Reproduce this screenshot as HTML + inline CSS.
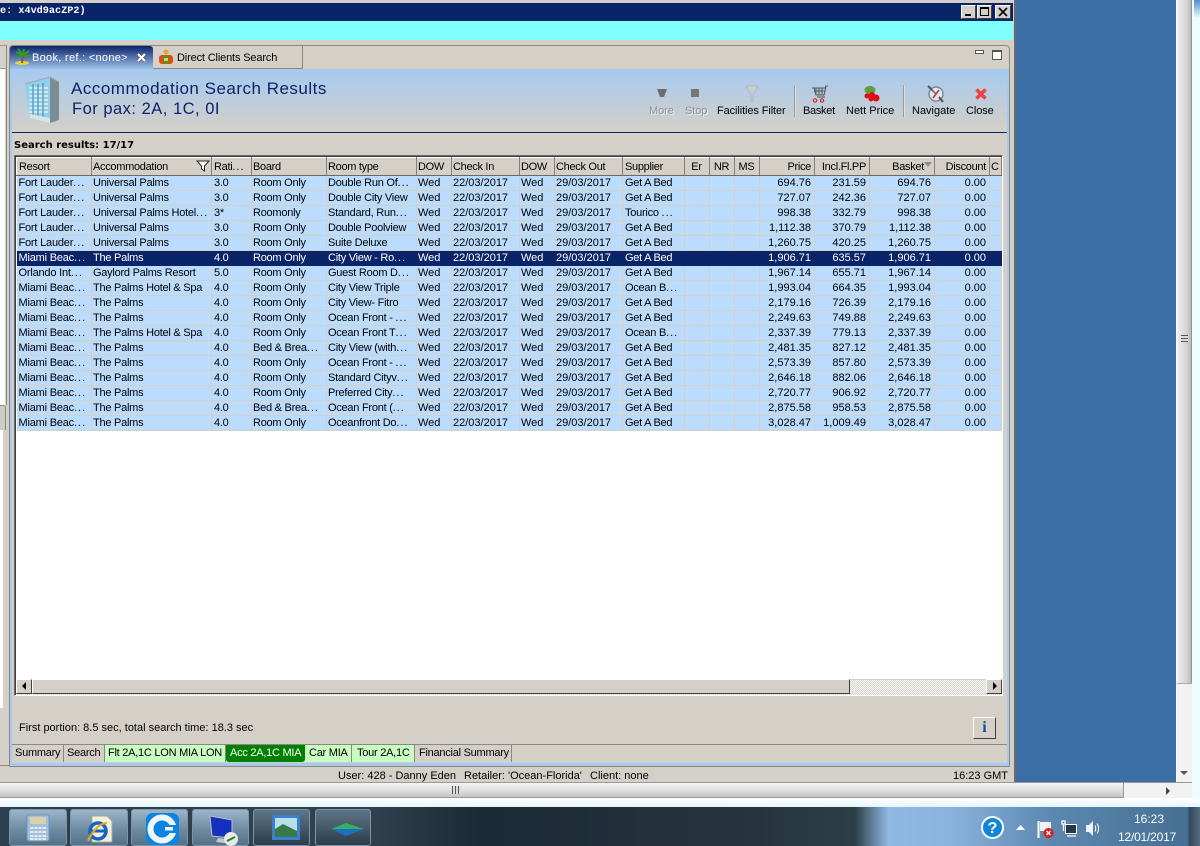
<!DOCTYPE html>
<html><head><meta charset="utf-8"><style>
*{box-sizing:border-box}
html,body{margin:0;padding:0;width:1200px;height:846px;overflow:hidden;background:#d4d0c8}
body{font-family:"Liberation Sans",sans-serif;font-size:11px;color:#000;position:relative}
.a{position:absolute}
.t{position:absolute;white-space:nowrap;line-height:13px}
i{font-style:normal;letter-spacing:1px}
table{border-collapse:collapse;table-layout:fixed;width:985px;position:absolute;left:16px;top:157px;font-size:11px}
th{height:18px;padding:1px 2px 0 1px;background:#d4d0c8;font-weight:normal;text-align:left;border-top:1px solid #fff;border-left:1px solid #fff;border-right:1px solid #808080;border-bottom:1px solid #6b6964;white-space:nowrap;overflow:hidden;line-height:15px;letter-spacing:-.3px}
td{height:15px;padding:0 1px;background:#bbdcfd;border-right:1px solid #d4d0c8;border-bottom:1px solid #d4d0c8;white-space:nowrap;overflow:hidden;line-height:14px;letter-spacing:-.25px}
td:first-child,td:nth-child(3),td:nth-child(10){padding-left:2px}
td:first-child{letter-spacing:-.2px}
th:first-child,th:nth-child(3),th:nth-child(10){padding-left:2px}
td:nth-child(n+6):nth-child(-n+9),td.r{letter-spacing:0}
td.r,th.r{text-align:right;padding-right:3px}
tr.s td{background:#0a246a;color:#fff;border-color:#0a246a;box-shadow:0 -1px 0 #0a246a}
.tab{position:absolute;top:745px;height:17px;line-height:17px;padding-left:3px;white-space:nowrap;border-right:1px solid #8a8880;letter-spacing:-.25px}
.tb{position:absolute;top:809px;height:37px;border:1px solid #7d95a8;border-radius:3px;background:linear-gradient(#9bb5c8,#6a889f 60%,#557187)}
.lbl{position:absolute;top:105px;white-space:nowrap;line-height:13px;letter-spacing:-.1px}
</style></head><body>

<div class="a" style="left:0;top:3px;width:1013px;height:18px;background:#0a246a"></div>
<div class="t" style="left:0;top:5px;color:#fff;font-weight:bold;font-family:'Liberation Mono',monospace;font-size:10.2px;line-height:14px">e: x4vd9acZP2)</div>
<div class="a" style="left:961px;top:5px;width:15px;height:14px;background:#d4d0c8;border:1px solid;border-color:#fff #404040 #404040 #fff"><div class="a" style="left:3px;bottom:2px;width:6px;height:2px;background:#000"></div></div>
<div class="a" style="left:977px;top:5px;width:15px;height:14px;background:#d4d0c8;border:1px solid;border-color:#fff #404040 #404040 #fff"><div class="a" style="left:2px;top:1px;width:9px;height:9px;border:1px solid #000;border-top-width:2px"></div></div>
<div class="a" style="left:995px;top:5px;width:16px;height:14px;background:#d4d0c8;border:1px solid;border-color:#fff #404040 #404040 #fff"><svg class="a" style="left:2px;top:1px" width="10" height="10"><path d="M1 1L9 9M9 1L1 9" stroke="#000" stroke-width="1.6"/></svg></div>
<div class="a" style="left:0;top:21px;width:1013px;height:19px;background:#80ffff"></div>

<div class="a" style="left:0;top:45px;width:7px;height:1px;background:#9a9890"></div>
<div class="a" style="left:0;top:68px;width:7px;height:1px;background:#9a9890"></div>
<div class="a" style="left:0;top:69px;width:5px;height:336px;background:#fff"></div>
<div class="a" style="left:0;top:405px;width:6px;height:25px;background:#cfccc5;border-top:1px solid #8a8880;border-right:1px solid #8a8880;border-radius:0 3px 0 0"></div>
<div class="a" style="left:0;top:430px;width:3px;height:278px;background:#fff"></div>
<div class="a" style="left:6px;top:45px;width:1px;height:360px;background:#8a8880"></div>
<div class="a" style="left:0;top:765px;width:10px;height:1px;background:#8a8880"></div>

<div class="a" style="left:9px;top:45px;width:1001px;height:722px;background:#d4d0c8;border:1px solid #8a8880;border-radius:4px 4px 0 0"></div>
<div class="a" style="left:10px;top:69px;width:2px;height:696px;background:#a6caf0"></div>
<div class="a" style="left:1007px;top:69px;width:2px;height:696px;background:#a6caf0"></div>
<div class="a" style="left:10px;top:763px;width:999px;height:3px;background:#a6caf0"></div>

<div class="a" style="left:10px;top:46px;width:143px;height:24px;background:linear-gradient(#0a246a,#a6caf0);border-radius:3px 3px 0 0"></div>
<svg class="a" style="left:12px;top:48px" width="20" height="18"><ellipse cx="10" cy="15" rx="7" ry="2" fill="#e8d23a"/><path d="M10 15L11 7" stroke="#8a5a20" stroke-width="2"/><path d="M11 7L4 4M11 7L6 1M11 7L12 1M11 7L17 3M11 7L18 8M11 7L5 9" stroke="#2f9a2f" stroke-width="2"/></svg>
<div class="t" style="left:32px;top:52px;color:#fff;letter-spacing:.3px">Book, ref.: &lt;none&gt;</div>
<svg class="a" style="left:136px;top:52px" width="11" height="11"><path d="M2 2L9 9M9 2L2 9" stroke="#555" stroke-width="3.400"/><path d="M2 2L9 9M9 2L2 9" stroke="#fff" stroke-width="2.200"/></svg>
<div class="a" style="left:153px;top:46px;width:150px;height:23px;background:#d4d0c8;border-right:1px solid #8a8880;border-bottom:1px solid #8a8880"></div>
<svg class="a" style="left:158px;top:49px" width="16" height="17"><circle cx="8" cy="3" r="2.5" fill="#e8a040"/><rect x="1" y="6" width="14" height="9" rx="3" fill="#e84a10"/><rect x="5" y="7" width="6" height="7" fill="#2fa030"/><rect x="6" y="9" width="4" height="3" fill="#f0d030"/></svg>
<div class="t" style="left:177px;top:52px;letter-spacing:-.15px">Direct Clients Search</div>
<div class="a" style="left:975px;top:50px;width:9px;height:4px;background:#fff;border:1px solid #555"></div>
<div class="a" style="left:992px;top:50px;width:10px;height:10px;background:#fff;border:1px solid #555;border-top-width:2px"></div>

<div class="a" style="left:12px;top:69px;width:995px;height:63px;background:linear-gradient(#a6caf0,#d4d0c8)"></div>
<div class="a" style="left:12px;top:132px;width:995px;height:1px;background:#0a246a"></div>
<svg class="a" style="left:24px;top:76px" width="36" height="48"><path d="M1 8L26 1V47L6 42Z" fill="#8fd0ea"/><path d="M26 1L35 6V44L26 47Z" fill="#7c8c92"/><path d="M1 8L26 1L35 6" fill="none" stroke="#a0a8ac"/><path d="M5 12H24M5 16H24M5 20H24M5 24H24M5 28H24M5 32H24M5 36H24" stroke="#e4eef2" stroke-width="1.4"/><path d="M9 8V40M14 8V41M19 7V42" stroke="#4f8fb0" stroke-width="1.2"/><path d="M6 38L26 42V47L6 42Z" fill="#d8e4e8"/></svg>
<div class="t" style="left:71px;top:79px;font-size:17px;line-height:19px;color:#0a246a;letter-spacing:.5px">Accommodation Search Results</div>
<div class="t" style="left:72px;top:100px;font-size:16.5px;line-height:19px;color:#0a246a;letter-spacing:.5px">For pax: 2A, 1C, 0I</div>

<svg class="a" style="left:656px;top:88px" width="12" height="11"><path d="M1 1H11L8 9H4Z" fill="#6e6e6e"/></svg>
<div class="a" style="left:691px;top:89px;width:8px;height:8px;background:#777"></div>
<svg class="a" style="left:744px;top:85px" width="16" height="18"><path d="M2 2C5 0 11 0 14 2L9 9V17H7V9Z" fill="#c8cccc" stroke="#a8acac" stroke-width=".6"/></svg>
<div class="lbl" style="left:649px;color:#8f8f8f;text-shadow:1px 1px 0 #eee">More</div>
<div class="lbl" style="left:685px;color:#8f8f8f;text-shadow:1px 1px 0 #eee">Stop</div>
<div class="lbl" style="left:717px">Facilities Filter</div>
<div class="a" style="left:794px;top:85px;width:2px;height:32px;background:linear-gradient(90deg,#7a7a7a,#fff)"></div>
<svg class="a" style="left:811px;top:85px" width="18" height="18"><path d="M1 3H14L15 1H17M3 3L5 10H13L15 2M5 3V10M8 3V10M11 3V10M3 6H14M6 12H14" fill="none" stroke="#555" stroke-width="1"/><circle cx="4" cy="15.5" r="1.7" fill="none" stroke="#e01010"/><circle cx="11" cy="15.5" r="1.7" fill="none" stroke="#e01010"/></svg>
<div class="lbl" style="left:803px;letter-spacing:-.3px">Basket</div>
<svg class="a" style="left:862px;top:85px" width="18" height="18"><ellipse cx="8" cy="5" rx="5.5" ry="4" fill="#5f9e3a"/><circle cx="5" cy="11" r="2.500" fill="#e00c14"/><circle cx="10" cy="10" r="3" fill="#e00c14"/><circle cx="14" cy="13" r="3.500" fill="#e00c14"/><circle cx="9" cy="14" r="2.500" fill="#e00c14"/></svg>
<div class="lbl" style="left:846px;letter-spacing:0">Nett Price</div>
<div class="a" style="left:903px;top:85px;width:2px;height:32px;background:linear-gradient(90deg,#7a7a7a,#fff)"></div>
<svg class="a" style="left:926px;top:85px" width="18" height="18"><circle cx="10" cy="9" r="7" fill="#dce8f2" stroke="#7a8a94" stroke-width="1.4"/><path d="M2 1L6 5M13 12L17 17" stroke="#555" stroke-width="2"/><path d="M13 5L10 9L7 13" stroke="#e03020" stroke-width="1.600"/><path d="M5 4L10 9" stroke="#3060b0" stroke-width="1.400"/></svg>
<div class="lbl" style="left:912px;letter-spacing:0">Navigate</div>
<svg class="a" style="left:974px;top:87px" width="14" height="14"><path d="M2.5 2.5L11.5 11.5M11.5 2.5L2.5 11.5" stroke="#ee4040" stroke-width="3.6"/></svg>
<div class="lbl" style="left:966px">Close</div>

<div class="t" style="left:14px;top:139px;font-family:'DejaVu Sans',sans-serif;font-size:10px;font-weight:bold;letter-spacing:0">Search results: 17/17</div>

<div class="a" style="left:14px;top:155px;width:989px;height:541px;background:#fff;border:1px solid;border-color:#6b6964 #fff #fff #6b6964;box-shadow:inset 1px 1px 0 #404040"></div>

<table>
<colgroup><col style="width:75px"><col style="width:120px"><col style="width:40px"><col style="width:75px"><col style="width:90px"><col style="width:35px"><col style="width:68px"><col style="width:35px"><col style="width:68px"><col style="width:62px"><col style="width:25px"><col style="width:25px"><col style="width:25px"><col style="width:55px"><col style="width:55px"><col style="width:65px"><col style="width:55px"><col style="width:12px"></colgroup>
<tr><th>Resort</th><th>Accommodation</th><th>Rati<i>...</i></th><th>Board</th><th>Room type</th><th>DOW</th><th>Check In</th><th>DOW</th><th>Check Out</th><th>Supplier</th><th style="text-align:center">Er</th><th style="text-align:center">NR</th><th style="text-align:center">MS</th><th class="r">Price</th><th class="r">Incl.Fl.PP</th><th class="r" style="padding-right:10px">Basket</th><th class="r">Discount</th><th>C</th></tr>
<tr><td>Fort Lauder<i>...</i></td><td>Universal Palms</td><td>3.0</td><td>Room Only</td><td>Double Run Of<i>...</i></td><td>Wed</td><td>22/03/2017</td><td>Wed</td><td>29/03/2017</td><td>Get A Bed</td><td></td><td></td><td></td><td class="r">694.76</td><td class="r">231.59</td><td class="r">694.76</td><td class="r">0.00</td><td></td></tr>
<tr><td>Fort Lauder<i>...</i></td><td>Universal Palms</td><td>3.0</td><td>Room Only</td><td>Double City View</td><td>Wed</td><td>22/03/2017</td><td>Wed</td><td>29/03/2017</td><td>Get A Bed</td><td></td><td></td><td></td><td class="r">727.07</td><td class="r">242.36</td><td class="r">727.07</td><td class="r">0.00</td><td></td></tr>
<tr><td>Fort Lauder<i>...</i></td><td>Universal Palms Hotel<i>...</i></td><td>3*</td><td>Roomonly</td><td>Standard, Run<i>...</i></td><td>Wed</td><td>22/03/2017</td><td>Wed</td><td>29/03/2017</td><td>Tourico <i>...</i></td><td></td><td></td><td></td><td class="r">998.38</td><td class="r">332.79</td><td class="r">998.38</td><td class="r">0.00</td><td></td></tr>
<tr><td>Fort Lauder<i>...</i></td><td>Universal Palms</td><td>3.0</td><td>Room Only</td><td>Double Poolview</td><td>Wed</td><td>22/03/2017</td><td>Wed</td><td>29/03/2017</td><td>Get A Bed</td><td></td><td></td><td></td><td class="r">1,112.38</td><td class="r">370.79</td><td class="r">1,112.38</td><td class="r">0.00</td><td></td></tr>
<tr><td>Fort Lauder<i>...</i></td><td>Universal Palms</td><td>3.0</td><td>Room Only</td><td>Suite Deluxe</td><td>Wed</td><td>22/03/2017</td><td>Wed</td><td>29/03/2017</td><td>Get A Bed</td><td></td><td></td><td></td><td class="r">1,260.75</td><td class="r">420.25</td><td class="r">1,260.75</td><td class="r">0.00</td><td></td></tr>
<tr class="s"><td>Miami Beac<i>...</i></td><td>The Palms</td><td>4.0</td><td>Room Only</td><td>City View - Ro<i>...</i></td><td>Wed</td><td>22/03/2017</td><td>Wed</td><td>29/03/2017</td><td>Get A Bed</td><td></td><td></td><td></td><td class="r">1,906.71</td><td class="r">635.57</td><td class="r">1,906.71</td><td class="r">0.00</td><td></td></tr>
<tr><td>Orlando Int<i>...</i></td><td>Gaylord Palms Resort</td><td>5.0</td><td>Room Only</td><td>Guest Room D<i>...</i></td><td>Wed</td><td>22/03/2017</td><td>Wed</td><td>29/03/2017</td><td>Get A Bed</td><td></td><td></td><td></td><td class="r">1,967.14</td><td class="r">655.71</td><td class="r">1,967.14</td><td class="r">0.00</td><td></td></tr>
<tr><td>Miami Beac<i>...</i></td><td>The Palms Hotel &amp; Spa</td><td>4.0</td><td>Room Only</td><td>City View Triple</td><td>Wed</td><td>22/03/2017</td><td>Wed</td><td>29/03/2017</td><td>Ocean B<i>...</i></td><td></td><td></td><td></td><td class="r">1,993.04</td><td class="r">664.35</td><td class="r">1,993.04</td><td class="r">0.00</td><td></td></tr>
<tr><td>Miami Beac<i>...</i></td><td>The Palms</td><td>4.0</td><td>Room Only</td><td>City View- Fitro</td><td>Wed</td><td>22/03/2017</td><td>Wed</td><td>29/03/2017</td><td>Get A Bed</td><td></td><td></td><td></td><td class="r">2,179.16</td><td class="r">726.39</td><td class="r">2,179.16</td><td class="r">0.00</td><td></td></tr>
<tr><td>Miami Beac<i>...</i></td><td>The Palms</td><td>4.0</td><td>Room Only</td><td>Ocean Front - <i>...</i></td><td>Wed</td><td>22/03/2017</td><td>Wed</td><td>29/03/2017</td><td>Get A Bed</td><td></td><td></td><td></td><td class="r">2,249.63</td><td class="r">749.88</td><td class="r">2,249.63</td><td class="r">0.00</td><td></td></tr>
<tr><td>Miami Beac<i>...</i></td><td>The Palms Hotel &amp; Spa</td><td>4.0</td><td>Room Only</td><td>Ocean Front T<i>...</i></td><td>Wed</td><td>22/03/2017</td><td>Wed</td><td>29/03/2017</td><td>Ocean B<i>...</i></td><td></td><td></td><td></td><td class="r">2,337.39</td><td class="r">779.13</td><td class="r">2,337.39</td><td class="r">0.00</td><td></td></tr>
<tr><td>Miami Beac<i>...</i></td><td>The Palms</td><td>4.0</td><td>Bed &amp; Brea<i>...</i></td><td>City View (with<i>...</i></td><td>Wed</td><td>22/03/2017</td><td>Wed</td><td>29/03/2017</td><td>Get A Bed</td><td></td><td></td><td></td><td class="r">2,481.35</td><td class="r">827.12</td><td class="r">2,481.35</td><td class="r">0.00</td><td></td></tr>
<tr><td>Miami Beac<i>...</i></td><td>The Palms</td><td>4.0</td><td>Room Only</td><td>Ocean Front - <i>...</i></td><td>Wed</td><td>22/03/2017</td><td>Wed</td><td>29/03/2017</td><td>Get A Bed</td><td></td><td></td><td></td><td class="r">2,573.39</td><td class="r">857.80</td><td class="r">2,573.39</td><td class="r">0.00</td><td></td></tr>
<tr><td>Miami Beac<i>...</i></td><td>The Palms</td><td>4.0</td><td>Room Only</td><td>Standard Cityv<i>...</i></td><td>Wed</td><td>22/03/2017</td><td>Wed</td><td>29/03/2017</td><td>Get A Bed</td><td></td><td></td><td></td><td class="r">2,646.18</td><td class="r">882.06</td><td class="r">2,646.18</td><td class="r">0.00</td><td></td></tr>
<tr><td>Miami Beac<i>...</i></td><td>The Palms</td><td>4.0</td><td>Room Only</td><td>Preferred City<i>...</i></td><td>Wed</td><td>22/03/2017</td><td>Wed</td><td>29/03/2017</td><td>Get A Bed</td><td></td><td></td><td></td><td class="r">2,720.77</td><td class="r">906.92</td><td class="r">2,720.77</td><td class="r">0.00</td><td></td></tr>
<tr><td>Miami Beac<i>...</i></td><td>The Palms</td><td>4.0</td><td>Bed &amp; Brea<i>...</i></td><td>Ocean Front (<i>...</i></td><td>Wed</td><td>22/03/2017</td><td>Wed</td><td>29/03/2017</td><td>Get A Bed</td><td></td><td></td><td></td><td class="r">2,875.58</td><td class="r">958.53</td><td class="r">2,875.58</td><td class="r">0.00</td><td></td></tr>
<tr><td>Miami Beac<i>...</i></td><td>The Palms</td><td>4.0</td><td>Room Only</td><td>Oceanfront Do<i>...</i></td><td>Wed</td><td>22/03/2017</td><td>Wed</td><td>29/03/2017</td><td>Get A Bed</td><td></td><td></td><td></td><td class="r">3,028.47</td><td class="r">1,009.49</td><td class="r">3,028.47</td><td class="r">0.00</td><td></td></tr>
</table>
<svg class="a" style="left:196px;top:160px" width="14" height="12"><path d="M1 1H13L8.5 6V11L5.5 9V6Z" fill="#fff" stroke="#222" stroke-width="1"/></svg>
<svg class="a" style="left:924px;top:162px" width="9" height="6"><path d="M0 0H8L4 5Z" fill="#8f8d88"/></svg>

<div class="a" style="left:16px;top:679px;width:986px;height:16px;background:repeating-conic-gradient(#d4d0c8 0 25%,#fff 0 50%) 0 0/2px 2px;border-top:1px solid #d4d0c8"></div>
<div class="a" style="left:16px;top:679px;width:16px;height:15px;background:#d4d0c8;border:1px solid;border-color:#fff #404040 #404040 #fff"><svg class="a" style="left:4px;top:2px" width="6" height="9"><path d="M5 0V8L1 4Z" fill="#000"/></svg></div>
<div class="a" style="left:32px;top:679px;width:818px;height:15px;background:#d4d0c8;border:1px solid;border-color:#fff #404040 #404040 #fff"></div>
<div class="a" style="left:986px;top:679px;width:16px;height:15px;background:#d4d0c8;border:1px solid;border-color:#fff #404040 #404040 #fff"><svg class="a" style="left:5px;top:2px" width="6" height="9"><path d="M1 0V8L5 4Z" fill="#000"/></svg></div>

<div class="t" style="left:19px;top:722px">First portion: 8.5 sec, total search time: 18.3 sec</div>
<div class="a" style="left:973px;top:717px;width:23px;height:22px;background:#d4d0c8;border:1px solid;border-color:#fff #404040 #404040 #fff;color:#0a4fa0;font:bold 16px/19px 'Liberation Serif',serif;text-align:center">i</div>

<div class="a" style="left:12px;top:744px;width:995px;height:1px;background:#8a8880"></div>
<div class="tab" style="left:12px;width:52px;padding-left:3px">Summary</div>
<div class="tab" style="left:64px;width:41px;padding-left:3px">Search</div>
<div class="tab" style="left:105px;width:121px;background:#c8fcc0">Flt 2A,1C LON MIA LON</div>
<div class="tab" style="left:226px;width:79px;background:#008000;color:#fff;border-radius:0 0 3px 3px;padding-left:4px;border-right:0">Acc 2A,1C MIA</div>
<div class="tab" style="left:305px;width:47px;background:#c8fcc0;padding-left:4px">Car MIA</div>
<div class="tab" style="left:352px;width:63px;background:#c8fcc0;padding-left:5px">Tour 2A,1C</div>
<div class="tab" style="left:415px;width:97px;padding-left:4px">Financial Summary</div>

<div class="a" style="left:0;top:767px;width:1013px;height:16px;background:#d4d0c8"></div>
<div class="t" style="left:338px;top:770px">User: 428 - Danny Eden</div>
<div class="t" style="left:464px;top:770px">Retailer: 'Ocean-Florida'</div>
<div class="t" style="left:590px;top:770px">Client: none</div>
<div class="t" style="left:953px;top:770px">16:23 GMT</div>

<div class="a" style="left:1016px;top:0;width:160px;height:782px;background:#3a6ea5"></div>
<div class="a" style="left:1013px;top:0;width:3px;height:782px;background:#6a6a6a;border-left:1px solid #d4d0c8"></div>

<div class="a" style="left:1176px;top:0;width:16px;height:800px;background:linear-gradient(90deg,#fff,#e8e8e8 20%,#d8d8d8 60%,#c0c0c0 90%,#808080)"></div>
<div class="a" style="left:1177px;top:683px;width:15px;height:100px;background:#f2f2f2;border-top:1px solid #aaa"></div>
<div class="a" style="left:1181px;top:335px;width:7px;height:7px;background:repeating-linear-gradient(#555 0 1px,#ddd 1px 3px)"></div>
<svg class="a" style="left:1180px;top:771px" width="9" height="6"><path d="M0 0H8L4 4Z" fill="#555"/></svg>
<div class="a" style="left:1192px;top:0;width:8px;height:806px;background:#eefcff"></div>
<div class="a" style="left:1194px;top:0;width:6px;height:18px;background:linear-gradient(#4a90d0,#eefcff)"></div>

<div class="a" style="left:0;top:782px;width:1192px;height:16px;background:#f2f2f2;border-top:1px solid #9a9a9a"></div>
<div class="a" style="left:0;top:783px;width:1124px;height:15px;background:linear-gradient(#f4f4f4,#e0e0e0 50%,#c4c4c4);border-bottom:1px solid #999;border-right:1px solid #999"></div>
<div class="a" style="left:452px;top:786px;width:9px;height:8px;background:repeating-linear-gradient(90deg,#555 0 1px,#ddd 1px 3px)"></div>
<svg class="a" style="left:1165px;top:787px" width="6" height="9"><path d="M1 0V8L5 4Z" fill="#444"/></svg>
<div class="a" style="left:0;top:798px;width:1200px;height:9px;background:linear-gradient(#fff,#e4f6fb)"></div>

<div class="a" style="left:0;top:807px;width:1200px;height:39px;background:linear-gradient(90deg,#2c3e50 0,#30414f 370px,#1a2a36 480px,#26343e 760px,#2c3f47 855px,#8fb8e2 888px,#8ab4de 950px,#5d88b1 1050px,#456f92 1188px,#33495c 1189px,#53697a 1200px)"></div>

<div class="tb" style="left:9px;width:58px"></div>
<div class="tb" style="left:70px;width:58px"></div>
<div class="tb" style="left:131px;width:57px"></div>
<div class="tb" style="left:192px;width:57px"></div>
<div class="tb" style="left:253px;width:57px;background:linear-gradient(#5f7587,#2c3d4b)"></div>
<div class="tb" style="left:315px;width:56px;background:linear-gradient(#5f7587,#2c3d4b)"></div>

<svg class="a" style="left:26px;top:814px" width="24" height="28"><rect x="1" y="1" width="22" height="26" rx="2" fill="#9fc0de" stroke="#6d93b6"/><rect x="4" y="3" width="16" height="7" fill="#d8d0a8"/><path d="M4 14H20M4 18H20M4 22H20M4 25H20" stroke="#e8e8e8" stroke-width="2"/><path d="M8 13V27M12 13V27M16 13V27" stroke="#9fc0de" stroke-width="1"/></svg>
<svg class="a" style="left:84px;top:815px" width="30" height="30"><path d="M8 1H23L28 6V27H8Z" fill="#f4efd8" stroke="#a8a890"/><circle cx="14" cy="16" r="8" fill="none" stroke="#1464c8" stroke-width="3.5"/><path d="M6 16H22" stroke="#1464c8" stroke-width="3"/><path d="M4 26C8 16 16 8 23 8" fill="none" stroke="#e8a820" stroke-width="2"/></svg>
<svg class="a" style="left:146px;top:813px" width="33" height="32"><rect width="33" height="32" rx="7" fill="#0a84e0"/><circle cx="16" cy="16" r="11.5" fill="none" stroke="#eef6fc" stroke-width="6"/><rect x="16" y="12" width="17" height="8" rx="3" fill="#0a84e0"/><rect x="19" y="14" width="8" height="3.5" fill="#eef6fc"/></svg>
<svg class="a" style="left:208px;top:814px" width="32" height="32"><path d="M2 2L24 6V24L4 22Z" fill="#1430c0" stroke="#b8c0c8"/><path d="M10 24L24 26V30L8 28Z" fill="#c4c8cc"/><circle cx="23" cy="25" r="7" fill="#e8e8e8"/><path d="M19 27L27 23" stroke="#208030" stroke-width="2"/></svg>
<svg class="a" style="left:271px;top:814px" width="30" height="27"><rect x="1" y="1" width="28" height="25" fill="#3a80d0"/><rect x="4" y="4" width="22" height="19" fill="#b8e0e8"/><path d="M4 15L12 10L26 17V23H4Z" fill="#3a7a48"/></svg>
<svg class="a" style="left:331px;top:823px" width="33" height="13"><path d="M0 6L15 0L33 6Z" fill="#36b060"/><path d="M0 6L33 6L15 13Z" fill="#1c70c4"/></svg>

<svg class="a" style="left:981px;top:816px" width="23" height="23"><circle cx="11.5" cy="11.5" r="10.5" fill="#0f86d8" stroke="#fff" stroke-width="2"/><text x="11.5" y="17" font-family="Liberation Sans,sans-serif" font-size="16" font-weight="bold" fill="#fff" text-anchor="middle">?</text></svg>
<svg class="a" style="left:1016px;top:825px" width="10" height="6"><path d="M0 5L4.5 0L9 5Z" fill="#fff"/></svg>
<svg class="a" style="left:1037px;top:820px" width="18" height="19"><path d="M1.500 1V18" stroke="#fff" stroke-width="2"/><path d="M3 2H14V11H3Z" fill="#f0f4f8"/><circle cx="11.500" cy="13" r="5" fill="#e01818"/><path d="M9.500 11L13.500 15M13.500 11L9.500 15" stroke="#fff" stroke-width="1.400"/></svg>
<svg class="a" style="left:1061px;top:820px" width="17" height="17"><rect x="4.500" y="4.500" width="11" height="9" fill="#24384a" stroke="#fff"/><path d="M1 1H4V4H1ZM2.500 4V11M6 16H15" stroke="#fff" stroke-width="1.300" fill="none"/></svg>
<svg class="a" style="left:1085px;top:820px" width="17" height="17"><path d="M1 5H4L8 1V16L4 12H1Z" fill="#eef2f6"/><path d="M10 5.500C11 7 11 10 10 11.500M12 3.500C14 6 14 11 12 13.500" fill="none" stroke="#fff"/></svg>
<div class="t" style="left:1134px;top:812px;color:#fff;font-size:12px;line-height:14px">16:23</div>
<div class="t" style="left:1118px;top:830px;color:#fff;font-size:12px;line-height:14px;letter-spacing:-.2px">12/01/2017</div>

</body></html>
